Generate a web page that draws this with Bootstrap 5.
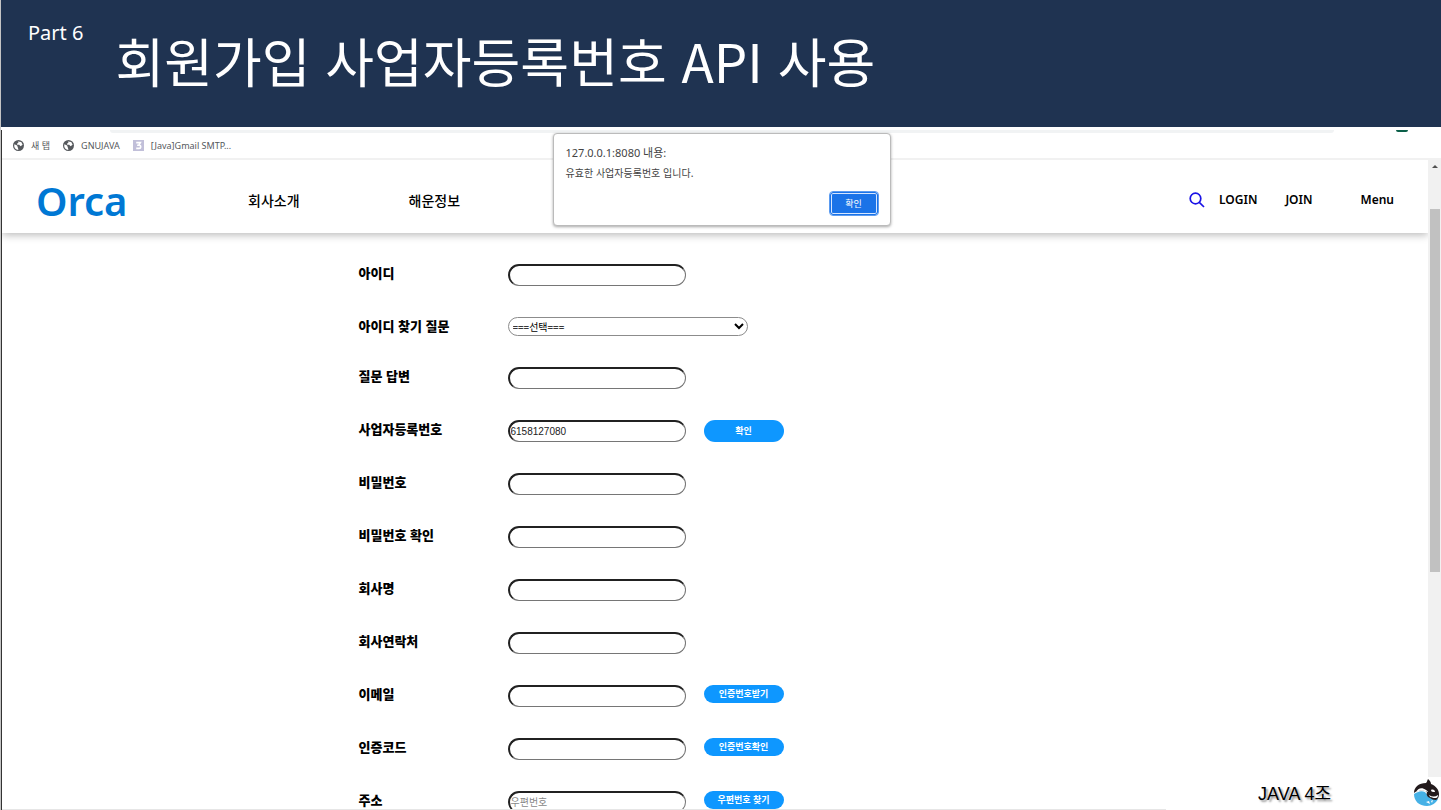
<!DOCTYPE html>
<html lang="ko">
<head>
<meta charset="utf-8">
<meta name="viewport" content="width=device-width, initial-scale=1">
<title>회원가입 사업자등록번호 API 사용</title>
<link href="https://cdn.jsdelivr.net/npm/bootstrap@5.3.0/dist/css/bootstrap.min.css" rel="stylesheet">
<style>
  body { font-family: "Noto Sans CJK KR", sans-serif; font-size: 12px; color: #000; border-left: 1px solid #c4c4c4; }
  a { color: inherit; text-decoration: none; }
  .slide-head { background: #1f3351; height: 127px; padding-left: 27px; gap: 32px; }
  .slide-part { font-family: "Noto Sans", sans-serif; font-size: 20px; line-height: 28px; padding-top: 19px; }
  .slide-title { font-size: 53px; line-height: 72px; font-weight: 400; padding-top: 24px; }

  .browser-view { margin-top: 3px; border-left: 1px solid #333; }
  .address-row { height: 3px; padding: 0 33px 0 108px; gap: 62px; }
  .address-pill { background: #f1f3f4; border-radius: 0 0 8px 8px; }
  .avatar-edge { width: 12px; height: 2px; background: #0b5f49; border-radius: 0 0 6px 6px; }
  .bookmarks { height: 27px; padding: 0 11px; border-bottom: 2px solid #f1f1f1; color: #55585c; font-size: 9px; gap: 13px; }
  .bookmarks svg { width: 11px; height: 11px; margin-right: 7px; }
  .bookmarks .latin { font-family: "Noto Sans", sans-serif; }

  .site-nav { height: 73px; padding: 0 34px; box-shadow: 0 2px 8px rgba(0,0,0,.28); }
  .site-logo { font: 600 40px/48px "Noto Sans", sans-serif; color: #0078d4; width: 212px; padding-top: 8px; }
  .site-menu { font-size: 14px; font-weight: 500; gap: 109px; padding-top: 8px; }
  .site-tools { font: 600 12px/20px "Noto Sans", sans-serif; padding-top: 6px; }
  .search-btn { width: 16px; height: 16px; margin-right: 14px; }

  .join-form { padding: 31px 0 0 25%; gap: 31px; }
  .join-row { font-size: 13px; }
  .join-row label { width: 149px; line-height: 18px; font-weight: 900; }
  .join-row input { width: 178px; height: 22px; border: 2px inset #767676; border-width: 2px 1px 1px 2px; border-radius: 12px; padding: 0 1px; font: 10px "Liberation Sans", "Noto Sans CJK KR", sans-serif; color: #222; }
  .join-row input::placeholder { color: #888; }
  .join-row select { width: 240px; height: 19px; border: 1px solid #8c8c8c; border-radius: 10px; background: #fff; font-size: 10px; padding: 0; color: #000; }
  .pill-btn { width: 80px; height: 18px; margin-left: 18px; border-radius: 11px; background: #0e97ff; color: #fff; font-size: 9px; line-height: 18px; font-weight: 700; }
  .pill-tall { height: 22px; line-height: 22px; }

  .scroll-rail { width: 13px; background: #f1f1f1; padding: 0 1px 0 2px; }
  .scroll-rail svg { height: 49px; }
  .scroll-thumb { height: 56%; background: #c1c1c1; }
  .page-end { height: 1px; background: #e6e6e6; }

  .alert-box { top: 3px; left: 50%; transform: translateX(-50%); width: 338px; height: 93px; padding: 9px 12px 10px 12px; border: 1px solid #bbb; border-radius: 4px; box-shadow: 0 1px 3px rgba(0,0,0,.35); color: #444; z-index: 5; }
  .alert-host { font: 11px/20px "Noto Sans", "Noto Sans CJK KR", sans-serif; }
  .alert-text { font-size: 10px; line-height: 20px; }
  .alert-ok { width: 48px; height: 23px; background: #1a73e8; border: 1px solid #1a73e8; box-shadow: inset 0 0 0 1px #d6e6ff; outline: 1px solid #5b9bf0; border-radius: 3px; color: #fff; font-size: 9px; line-height: 18px; }

  .team-mark { right: 0; bottom: 0; width: 275px; height: 33px; z-index: 4; gap: 82px; }
  .team-name { font: 18px/24px "Liberation Sans", "Noto Sans CJK KR", sans-serif; text-shadow: 2px 2px 2px rgba(0,0,0,.4); }
</style>
</head>
<body class="vh-100 d-flex flex-column overflow-hidden bg-white position-relative">
<header class="slide-head d-flex align-items-start text-white flex-shrink-0">
  <div class="slide-part">Part 6</div>
  <h1 class="slide-title m-0 text-nowrap">회원가입 사업자등록번호 API 사용</h1>
</header>

<div class="browser-view d-flex flex-column flex-grow-1 position-relative overflow-hidden">
  <div class="address-row d-flex flex-shrink-0">
    <div class="address-pill flex-grow-1"></div>
    <div class="avatar-edge"></div>
  </div>
  <nav class="bookmarks d-flex align-items-center flex-shrink-0" aria-label="북마크">
    <a href="#" class="d-flex align-items-center"><svg viewBox="0 0 16 16"><circle cx="8" cy="8" r="8" fill="#56595d"/><path d="M2 6l4 2 1 3 1 3-2 0C3 13 1 10 2 6zM7 2l5 1 2 4-3 2-2-2-3 0 0-2 2-1z" fill="#fff"/></svg>새 탭</a>
    <a href="#" class="d-flex align-items-center"><svg viewBox="0 0 16 16"><circle cx="8" cy="8" r="8" fill="#56595d"/><path d="M2 6l4 2 1 3 1 3-2 0C3 13 1 10 2 6zM7 2l5 1 2 4-3 2-2-2-3 0 0-2 2-1z" fill="#fff"/></svg><span class="latin">GNUJAVA</span></a>
    <a href="#" class="d-flex align-items-center"><svg viewBox="0 0 12 12"><path d="M0 0h12v12H0z" fill="#c1bfd9"/><path d="M3.500 2.800h4.500L6.500 5.500c2.500 0 2.500 3.700 0 3.700H3.500M4.500 5.700h2" fill="none" stroke="#fff" stroke-width="1.800"/></svg><span class="latin">[Java]Gmail SMTP...</span></a>
  </nav>

  <div class="d-flex flex-grow-1 overflow-hidden">
    <div class="flex-grow-1 overflow-hidden">
      <nav class="site-nav d-flex align-items-center" aria-label="주 메뉴">
        <a href="#" class="site-logo">Orca</a>
        <div class="site-menu d-flex">
          <a href="#">회사소개</a>
          <a href="#">해운정보</a>
        </div>
        <div class="site-tools d-flex align-items-center ms-auto">
          <button type="button" class="search-btn btn p-0 border-0 d-flex" aria-label="검색"><svg width="16" height="16" viewBox="0 0 16 16" fill="none" stroke="#1a12e6" stroke-width="1.700"><circle cx="6.500" cy="6.500" r="5.300"/><path d="M10.300 10.300l4.700 4.700"/></svg></button>
          <a href="#">LOGIN</a>
          <a href="#" class="ms-4 ps-1 pe-5">JOIN</a>
          <a href="#">Menu</a>
        </div>
      </nav>

      <form class="join-form d-flex flex-column">
        <div class="join-row d-flex align-items-start"><label for="uid">아이디</label><input id="uid" type="text"></div>
        <div class="join-row d-flex align-items-start"><label for="question">아이디 찾기 질문</label><select id="question"><option>===선택===</option></select></div>
        <div class="join-row d-flex align-items-start"><label for="answer">질문 답변</label><input id="answer" type="text"></div>
        <div class="join-row d-flex align-items-start"><label for="bizno">사업자등록번호</label><input id="bizno" type="text" value="6158127080"><button type="button" class="pill-btn pill-tall btn p-0 border-0">확인</button></div>
        <div class="join-row d-flex align-items-start"><label for="pw">비밀번호</label><input id="pw" type="password"></div>
        <div class="join-row d-flex align-items-start"><label for="pw2">비밀번호 확인</label><input id="pw2" type="password"></div>
        <div class="join-row d-flex align-items-start"><label for="company">회사명</label><input id="company" type="text"></div>
        <div class="join-row d-flex align-items-start"><label for="tel">회사연락처</label><input id="tel" type="text"></div>
        <div class="join-row d-flex align-items-start"><label for="email">이메일</label><input id="email" type="text"><button type="button" class="pill-btn btn p-0 border-0">인증번호받기</button></div>
        <div class="join-row d-flex align-items-start"><label for="code">인증코드</label><input id="code" type="text"><button type="button" class="pill-btn btn p-0 border-0">인증번호확인</button></div>
        <div class="join-row d-flex align-items-start"><label for="zip">주소</label><input id="zip" type="text" placeholder="우편번호"><button type="button" class="pill-btn btn p-0 border-0">우편번호 찾기</button></div>
      </form>
    </div>
    <div class="scroll-rail d-flex flex-column flex-shrink-0" aria-hidden="true">
      <svg class="flex-shrink-0" width="10" viewBox="0 0 10 49"><path d="M2 8l3-3 3 3z" fill="#505050"/></svg>
      <div class="scroll-thumb"></div>
    </div>
  </div>
  <div class="page-end flex-shrink-0"></div>

  <div class="alert-box position-absolute bg-white d-flex flex-column" role="alertdialog" aria-labelledby="alert-host">
    <div id="alert-host" class="alert-host">127.0.0.1:8080 내용:</div>
    <div class="alert-text">유효한 사업자등록번호 입니다.</div>
    <button type="button" class="alert-ok btn p-0 mt-auto ms-auto">확인</button>
  </div>
</div>

<footer class="team-mark position-absolute bg-white d-flex align-items-center justify-content-end">
  <span class="team-name">JAVA 4조</span>
  <svg width="28" height="29" viewBox="0 0 28 29" role="img" aria-label="Orca">
    <circle cx="13" cy="15" r="12" fill="#fff"/>
    <path d="M1 15c3-2 7-4 11-2 2 2 3 5 6 6 3 1 5 0 7 1-2 4-6 7-11 7C6 27 1 22 1 15z" fill="#46b1e6"/>
    <path d="M1 14C1 8 6 4 13 4c1-1 1-2 2-4 2 2 3 3 3 5 5 2 8 6 8 10 0 3-1 5-3 6-3 0-4-1-6-2-3-1-4-4-3-6-3-2-9-2-13 1z" fill="#231a1c"/>
    <path d="M3 13c2-4 6-5 10-2 1 1 2 1 2 2-3-1-8-2-12 0zM18 11c2-1 4 0 4 2-2 0-4 0-4-2zM16 16c3 2 6 2 9 0 0 2-1 3-2 3-3 0-6 0-7-3z" fill="#fff"/>
    <path d="M13 23l3-1 1 3-2-1zM18 22l2-1-1 3z" fill="#fff"/>
  </svg>
</footer>
<script src="https://cdn.jsdelivr.net/npm/bootstrap@5.3.0/dist/js/bootstrap.bundle.min.js"></script>
</body>
</html>
